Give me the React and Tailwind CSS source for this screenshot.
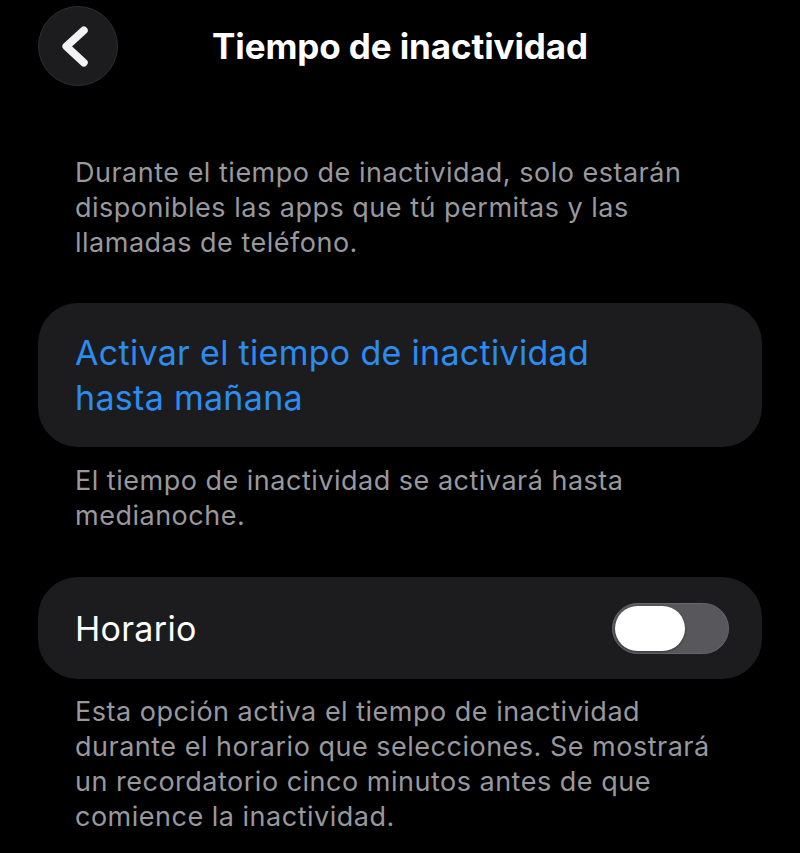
export default function App() {
  const note = 'text-[27px] tracking-[0.5px] leading-[35px] text-[#98989e] px-[75px]';
  return (
    <div
      className="w-[800px] h-[853px] bg-black overflow-hidden text-white"
      style={{ fontFamily: 'Inter, "Noto Sans", sans-serif' }}
    >
      {/* Navigation bar */}
      <div className="grid grid-cols-[1fr_auto_1fr] items-center pt-[6px] px-[38px]">
        <button className="w-[80px] h-[80px] rounded-full bg-[#1c1c1e] border border-[#2e2e30] flex items-center justify-center">
          <svg width="80" height="80" viewBox="0 0 80 80" className="block">
            <path
              d="M46 24 L28 40.5 L46 57"
              fill="none"
              stroke="#f2f2f2"
              strokeWidth="8"
              strokeLinecap="round"
              strokeLinejoin="round"
            />
          </svg>
        </button>
        <h1 className="text-[35px] font-bold tracking-[-0.1px] leading-none text-center">
          Tiempo de inactividad
        </h1>
        <div />
      </div>

      <p className={`mt-[69px] ${note}`}>
        Durante el tiempo de inactividad, solo estarán
        <br />
        disponibles las apps que tú permitas y las
        <br />
        llamadas de teléfono.
      </p>

      {/* Activate until tomorrow */}
      <div className="mt-[43px] mx-[38px] rounded-[40px] bg-[#1c1c1e] py-[27px] pl-[37px]">
        <div className="text-[34px] tracking-[0.3px] leading-[45px] text-[#2b8cf2]">
          Activar el tiempo de inactividad
          <br />
          hasta mañana
        </div>
      </div>

      <p className={`mt-[16px] ${note}`}>
        El tiempo de inactividad se activará hasta
        <br />
        medianoche.
      </p>

      {/* Schedule toggle */}
      <div className="mt-[44px] mx-[38px] h-[102px] rounded-[40px] bg-[#1c1c1e] flex items-center justify-between pl-[37px] pr-[33px]">
        <span className="text-[34px] tracking-[0.3px]">Horario</span>
        <div className="w-[117px] h-[51px] rounded-full bg-[#58575c] border border-[#67666b] p-[2px] flex items-center">
          <div className="w-[70px] h-[45px] rounded-full bg-white shadow-[0_1px_3px_rgba(0,0,0,0.4)]" />
        </div>
      </div>

      <p className={`mt-[15px] ${note}`}>
        Esta opción activa el tiempo de inactividad
        <br />
        durante el horario que selecciones. Se mostrará
        <br />
        un recordatorio cinco minutos antes de que
        <br />
        comience la inactividad.
      </p>
    </div>
  );
}
